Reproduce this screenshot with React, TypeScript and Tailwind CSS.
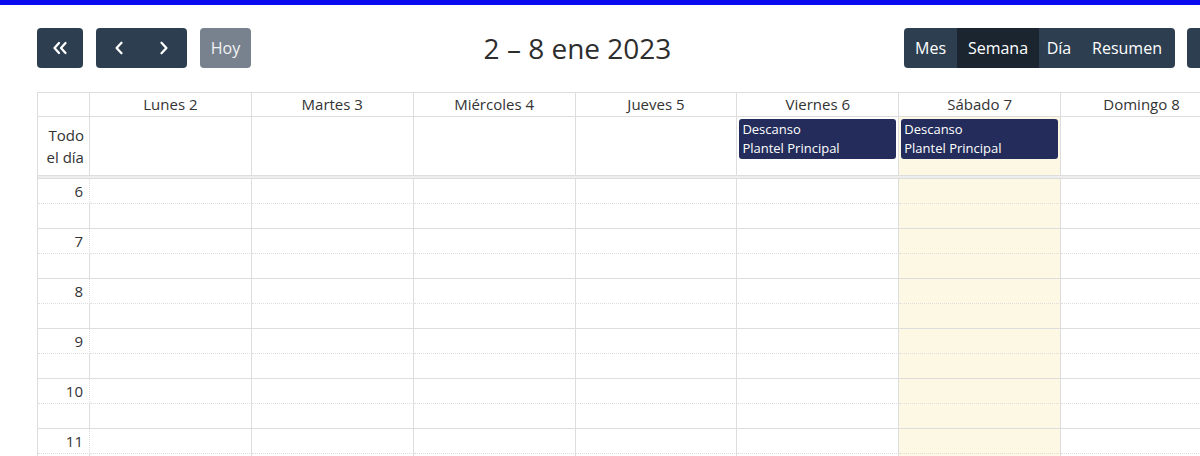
import React from "react";

const days = ["Lunes 2", "Martes 3", "Miércoles 4", "Jueves 5", "Viernes 6", "Sábado 7", "Domingo 8"];
const TODAY = 5;

function Chevron({ dir }: { dir: "left" | "right" }) {
  return (
    <svg width="10" height="14" viewBox="0 0 10 14" fill="none">
      <polyline
        points={dir === "left" ? "7.5,1.8 2.6,7 7.5,12.2" : "2.5,1.8 7.4,7 2.5,12.2"}
        stroke="white"
        strokeWidth="2.3"
        strokeLinecap="round"
        strokeLinejoin="round"
      />
    </svg>
  );
}

function DoubleChevron() {
  return (
    <svg width="16" height="14" viewBox="0 0 16 14" fill="none">
      <polyline points="7,2 2.5,7 7,12" stroke="white" strokeWidth="2.3" strokeLinecap="round" strokeLinejoin="round" />
      <polyline points="13.5,2 9,7 13.5,12" stroke="white" strokeWidth="2.3" strokeLinecap="round" strokeLinejoin="round" />
    </svg>
  );
}

function EventChip() {
  return (
    <div className="mx-[2px] mt-[2px] rounded-[3px] bg-[#232c5a] px-[3px] py-[1px] text-[13px] leading-[19px] text-white">
      <div>Descanso</div>
      <div>Plantel Principal</div>
    </div>
  );
}

export default function App() {
  const slots = Array.from({ length: 12 }, (_, i) => i);

  return (
    <div className="h-[456px] w-[1200px] overflow-hidden bg-white font-['Open_Sans',sans-serif] text-[#333]">
      {/* top bar */}
      <div className="h-[5px] bg-[#0a0aee]" />

      <div className="ml-[37px] w-[1186px] pt-[23px]">
        {/* Toolbar */}
        <div className="mb-6 flex h-10 items-center justify-between">
          <div className="flex items-center gap-[13px]">
            <button className="flex h-10 w-[46px] items-center justify-center rounded-[4px] bg-[#2c3e50]">
              <DoubleChevron />
            </button>
            <div className="flex h-10 overflow-hidden rounded-[4px] bg-[#2c3e50]">
              <button className="flex w-[45px] items-center justify-center">
                <Chevron dir="left" />
              </button>
              <button className="flex w-[46px] items-center justify-center">
                <Chevron dir="right" />
              </button>
            </div>
            <button className="h-10 w-[51px] rounded-[4px] bg-[#77828e] text-[16px] text-[#f2f3f5]">Hoy</button>
          </div>

          <h2 className="text-[28px] leading-none text-[#2d2d2d]">2 – 8 ene 2023</h2>

          <div className="flex items-center gap-3">
            <div className="flex h-10 overflow-hidden rounded-[4px] bg-[#2c3e50] text-[16px] text-white">
              <button className="w-[53px]">Mes</button>
              <button className="w-[82px] bg-[#1a252f]">Semana</button>
              <button className="w-[40px]">Día</button>
              <button className="w-[96px]">Resumen</button>
            </div>
            <button className="h-10 w-[36px] rounded-[4px] bg-[#2c3e50]" />
          </div>
        </div>

        {/* Week grid */}
        <div className="border-l border-t border-[#ddd]">
          {/* Column headers */}
          <div className="flex h-6 text-[15px]">
            <div className="w-[52px] border-b border-r border-[#ddd]" />
            {days.map((d) => (
              <div key={d} className="flex w-[162px] items-center justify-center border-b border-r border-[#ddd]">
                {d}
              </div>
            ))}
          </div>

          {/* All-day row */}
          <div className="flex h-[58px]">
            <div className="flex w-[52px] items-center justify-end border-r border-[#ddd] pr-[5px] text-right text-[15px] leading-[22.5px]">
              Todo
              <br />
              el día
            </div>
            {days.map((d, i) => (
              <div
                key={d}
                className={`w-[162px] border-r border-[#ddd] ${i === TODAY ? "bg-[#fcf8e3]" : ""}`}
              >
                {(i === 4 || i === 5) && <EventChip />}
              </div>
            ))}
          </div>

          {/* Divider */}
          <div className="h-[4px] border-y border-[#ddd] bg-[#eee]" />

          {/* Time slots */}
          {slots.map((s) => {
            const isHalf = s % 2 === 0;
            const line = isHalf ? "border-dotted" : "border-solid";
            return (
              <div key={s} className="flex h-[25px]">
                <div className={`w-[52px] border-b border-r border-[#ddd] ${line} pr-[6px] pt-[1px] text-right text-[15px] leading-[22px]`}>
                  <span className="border-none">{isHalf ? 6 + s / 2 : ""}</span>
                </div>
                {days.map((d, i) => (
                  <div
                    key={d}
                    className={`w-[162px] border-b border-[#ddd] ${line} ${i === TODAY ? "bg-[#fcf8e3]" : ""}`}
                    style={{ borderRight: "1px solid #ddd" }}
                  />
                ))}
              </div>
            );
          })}
        </div>
      </div>
    </div>
  );
}
